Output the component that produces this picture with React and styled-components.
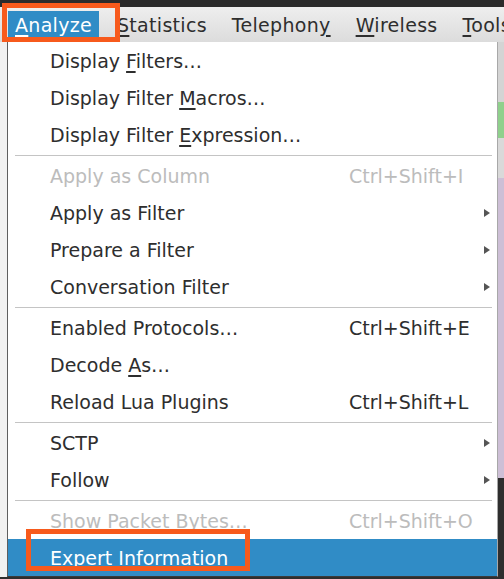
import React from 'react';
import styled, { createGlobalStyle } from 'styled-components';

const GlobalStyle = createGlobalStyle`
  html, body {
    margin: 0;
    padding: 0;
    background: #2e2e2e;
  }
  body {
    font-family: "DejaVu Sans", "Noto Sans", sans-serif;
  }
`;

const Screen = styled.div`
  position: relative;
  width: 504px;
  height: 579px;
  overflow: hidden;
  display: flex;
  flex-direction: column;
  background: #2e2e2e;
`;

const TitleStrip = styled.div`
  flex: none;
  height: 7px;
  background: #2b2b2b;
`;

const MenuBar = styled.div`
  flex: none;
  height: 35px;
  display: flex;
  align-items: center;
  gap: 11px;
  padding-left: 8px;
  background: linear-gradient(#eeeeee, #dcdcdc);
  font-size: 19px;
  letter-spacing: 0.3px;
  white-space: nowrap;
`;

const BarItem = styled.div`
  height: 28px;
  line-height: 28px;
  padding: 0 7px;
  background: ${p => (p.$active ? '#308cc6' : 'transparent')};
  color: ${p => (p.$active ? '#ffffff' : '#2e2e2e')};
`;

const Key = styled.span`
  text-decoration: underline;
  text-decoration-thickness: 1.5px;
  text-underline-offset: 3px;
`;

const Body = styled.div`
  flex: none;
  height: 535px;
  display: flex;
  align-items: flex-start;
`;

const LeftEdge = styled.div`
  width: 7px;
  height: 535px;
  background: #f1f1f1;
`;

const Menu = styled.div`
  box-sizing: border-box;
  width: 491px;
  background: #ffffff;
  border-left: 1px solid #5e5e5e;
  border-right: 1px solid #a8a8a8;
  border-bottom: 1px solid #3a3a3a;
  font-size: 19px;
  white-space: nowrap;
`;

const Row = styled.div`
  height: 37px;
  display: grid;
  grid-template-columns: 299px 1fr 7px;
  align-items: center;
  padding: 0 6px 0 42px;
  background: ${p => (p.$selected ? '#308cc6' : 'transparent')};
  color: ${p => (p.$selected ? '#ffffff' : p.$disabled ? '#bcbcbc' : '#2e2e2e')};
`;

const Shortcut = styled.span`
  grid-column: 2;
`;

const Arrow = styled.span`
  grid-column: 3;
  width: 0;
  height: 0;
  border-top: 4.5px solid transparent;
  border-bottom: 4.5px solid transparent;
  border-left: 6px solid #555555;
`;

const Separator = styled.div`
  height: 1px;
  margin: 2px 5px 1px 7px;
  background: #c4c4c4;
`;

const RightEdge = styled.div`
  flex: 1;
  height: 535px;
  display: flex;
  flex-direction: column;
`;

const Band = styled.div`
  height: ${p => p.$h}px;
  background: ${p => p.$color};
`;

const Callout = styled.div`
  position: absolute;
  box-sizing: border-box;
  border: 5px solid #f75a1c;
  pointer-events: none;
`;

const TopCallout = styled(Callout)`
  left: 2px;
  top: 3px;
  width: 118px;
  height: 39px;
`;

const BottomCallout = styled(Callout)`
  left: 26px;
  top: 529px;
  width: 224px;
  height: 42px;
`;

const groups = [
  [
    { label: ['Display ', 'F', 'ilters…'] },
    { label: ['Display Filter ', 'M', 'acros…'] },
    { label: ['Display Filter ', 'E', 'xpression…'] },
  ],
  [
    { label: ['Apply as Column'], shortcut: 'Ctrl+Shift+I', disabled: true },
    { label: ['Apply as Filter'], submenu: true },
    { label: ['Prepare a Filter'], submenu: true },
    { label: ['Conversation Filter'], submenu: true },
  ],
  [
    { label: ['Enabled Protocols…'], shortcut: 'Ctrl+Shift+E' },
    { label: ['Decode ', 'A', 's…'] },
    { label: ['Reload Lua Plugins'], shortcut: 'Ctrl+Shift+L' },
  ],
  [
    { label: ['SCTP'], submenu: true },
    { label: ['Follow'], submenu: true },
  ],
  [
    { label: ['Show Packet Bytes…'], shortcut: 'Ctrl+Shift+O', disabled: true },
    { label: ['Expert Information'], selected: true },
  ],
];

function Label({ parts }) {
  return (
    <span>
      {parts.map((p, i) => (i === 1 ? <Key key={i}>{p}</Key> : <React.Fragment key={i}>{p}</React.Fragment>))}
    </span>
  );
}

export default function App() {
  return (
    <Screen>
      <GlobalStyle />
      <TitleStrip />
      <MenuBar>
        <BarItem $active><Key>A</Key>nalyze</BarItem>
        <BarItem><Key>S</Key>tatistics</BarItem>
        <BarItem>Telephon<Key>y</Key></BarItem>
        <BarItem><Key>W</Key>ireless</BarItem>
        <BarItem><Key>T</Key>ools</BarItem>
      </MenuBar>
      <Body>
        <LeftEdge />
        <Menu>
          {groups.map((items, g) => (
            <React.Fragment key={g}>
              {g > 0 && <Separator />}
              {items.map((item, i) => (
                <Row key={i} $disabled={item.disabled} $selected={item.selected}>
                  <Label parts={item.label} />
                  {item.shortcut && <Shortcut>{item.shortcut}</Shortcut>}
                  {item.submenu && <Arrow />}
                </Row>
              ))}
            </React.Fragment>
          ))}
        </Menu>
        <RightEdge>
          <Band $h={60} $color="#d4d4d4" />
          <Band $h={36} $color="#8fd08c" />
          <Band $h={40} $color="#d9d9d9" />
          <Band $h={300} $color="#cdbfd6" />
          <Band $h={99} $color="#2e2e2e" />
        </RightEdge>
      </Body>
      <TopCallout />
      <BottomCallout />
    </Screen>
  );
}
